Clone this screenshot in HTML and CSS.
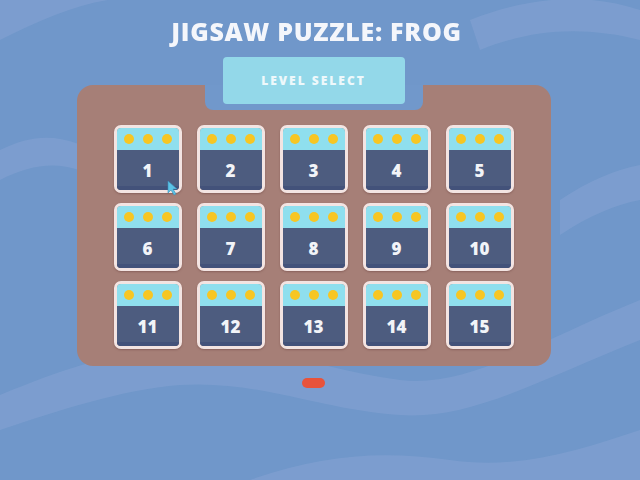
FILE: index.html
```html
<!DOCTYPE html>
<html lang="en">
<head>
  <meta charset="UTF-8">
  <title>Jigsaw Puzzle: Frog</title>
  <link rel="stylesheet" href="styles.css">
</head>
<body>

<!-- wavy water backdrop -->
<svg class="waves" viewBox="0 0 640 480" preserveAspectRatio="none">
  <path d="M0 40 C60 10 110 -10 170 0 L0 0 Z" />
  <path d="M0 150 C40 130 70 135 110 160 C150 185 190 170 230 150 L230 175 C190 195 150 210 110 185 C70 160 40 160 0 180 Z" />
  <path d="M470 20 C520 0 580 -10 640 10 L640 40 C580 25 530 30 480 50 Z" />
  <path d="M560 200 C590 180 615 170 640 165 L640 200 C615 205 590 215 560 235 Z" />
  <path d="M0 395 C60 370 120 350 180 345 C260 340 320 370 400 380 C470 388 540 340 640 300 L640 340 C540 380 470 420 400 415 C320 410 260 380 180 385 C120 390 60 410 0 430 Z" />
  <path d="M250 480 C320 455 380 450 450 460 C520 470 580 450 640 430 L640 480 Z" />
</svg>

<main class="screen">
  <h1 class="title">JIGSAW PUZZLE: FROG</h1>

  <section class="board">
    <div class="notch"></div>
    <div class="tab">LEVEL SELECT</div>

    <div class="levels">
      <a class="level" href="#"><span class="stars"><i></i><i></i><i></i></span><span class="num">1</span></a>
      <a class="level" href="#"><span class="stars"><i></i><i></i><i></i></span><span class="num">2</span></a>
      <a class="level" href="#"><span class="stars"><i></i><i></i><i></i></span><span class="num">3</span></a>
      <a class="level" href="#"><span class="stars"><i></i><i></i><i></i></span><span class="num">4</span></a>
      <a class="level" href="#"><span class="stars"><i></i><i></i><i></i></span><span class="num">5</span></a>
      <a class="level" href="#"><span class="stars"><i></i><i></i><i></i></span><span class="num">6</span></a>
      <a class="level" href="#"><span class="stars"><i></i><i></i><i></i></span><span class="num">7</span></a>
      <a class="level" href="#"><span class="stars"><i></i><i></i><i></i></span><span class="num">8</span></a>
      <a class="level" href="#"><span class="stars"><i></i><i></i><i></i></span><span class="num">9</span></a>
      <a class="level" href="#"><span class="stars"><i></i><i></i><i></i></span><span class="num">10</span></a>
      <a class="level" href="#"><span class="stars"><i></i><i></i><i></i></span><span class="num">11</span></a>
      <a class="level" href="#"><span class="stars"><i></i><i></i><i></i></span><span class="num">12</span></a>
      <a class="level" href="#"><span class="stars"><i></i><i></i><i></i></span><span class="num">13</span></a>
      <a class="level" href="#"><span class="stars"><i></i><i></i><i></i></span><span class="num">14</span></a>
      <a class="level" href="#"><span class="stars"><i></i><i></i><i></i></span><span class="num">15</span></a>
    </div>

    <!-- mouse pointer -->
    <svg class="pointer" viewBox="0 0 12 16">
      <path d="M1 1 L1 13 L4 10 L7 15 L9 14 L6 9 L10 9 Z" />
    </svg>
  </section>

  <div class="pager"><span class="page-dot"></span></div>
</main>

</body>
</html>
```

FILE: styles.css
```css
html, body {
  margin: 0;
  height: 100%;
}
body {
  font-family: 'Open Sans', 'Liberation Sans', sans-serif;
  background: #7097ca;
  color: #fff;
  overflow: hidden;
}
.waves {
  position: fixed;
  top: 0;
  left: 0;
  width: 100%;
  height: 100%;
  z-index: 0;
}
.waves path {
  fill: #83a2d2;
  opacity: 0.6;
}
.screen {
  position: relative;
  z-index: 1;
  display: flex;
  flex-direction: column;
  align-items: center;
  padding-right: 13px;
}
.title {
  margin: 0 0 0 6px;
  padding-top: 16px;
  font-size: 25px;
  line-height: 30px;
  font-weight: 800;
  letter-spacing: 0.7px;
  color: #f4f6fb;
}
.board {
  position: relative;
  margin-top: 39px;
  width: 474px;
  padding: 40px 37px 17px;
  box-sizing: border-box;
  background: #a67f77;
  border-radius: 16px;
}
/* gap cut into the board around the tab */
.notch {
  position: absolute;
  top: 0;
  left: 128px;
  width: 218px;
  height: 25px;
  background: #7198cb;
  border-radius: 0 0 8px 8px;
}
.tab {
  position: absolute;
  top: -28px;
  left: 146px;
  width: 182px;
  height: 47px;
  background: #93d8e9;
  border-radius: 4px;
  display: flex;
  align-items: center;
  justify-content: center;
  font-size: 12px;
  font-weight: 800;
  letter-spacing: 2px;
  color: #eef8fb;
}
.levels {
  display: grid;
  grid-template-columns: repeat(5, 68px);
  grid-auto-rows: 68px;
  column-gap: 15px;
  row-gap: 10px;
}
.level {
  display: flex;
  flex-direction: column;
  border: 3px solid #f3e4e2;
  border-radius: 7px;
  overflow: hidden;
  text-decoration: none;
  box-shadow: 0 1px 2px rgba(80, 40, 40, 0.35);
}
.stars {
  height: 22px;
  background: #8fdfee;
  display: flex;
  align-items: center;
  justify-content: center;
  gap: 9px;
}
.stars i {
  width: 10px;
  height: 10px;
  border-radius: 50%;
  background: #f7c623;
}
.num {
  flex: 1;
  background: #4d5c7f;
  box-shadow: inset 0 -4px 0 #43527a;
  display: flex;
  align-items: center;
  justify-content: center;
  font-size: 17px;
  font-weight: 800;
  color: #f2f4f8;
}
.pointer {
  position: absolute;
  left: 90px;
  top: 95px;
  width: 12px;
  height: 16px;
}
.pointer path {
  fill: #5cc3e6;
  stroke: #3a8fb8;
  stroke-width: 0.6;
}
.pager {
  margin-top: 12px;
}
.page-dot {
  display: block;
  width: 23px;
  height: 10px;
  border-radius: 5px;
  background: #e8533b;
}
```
